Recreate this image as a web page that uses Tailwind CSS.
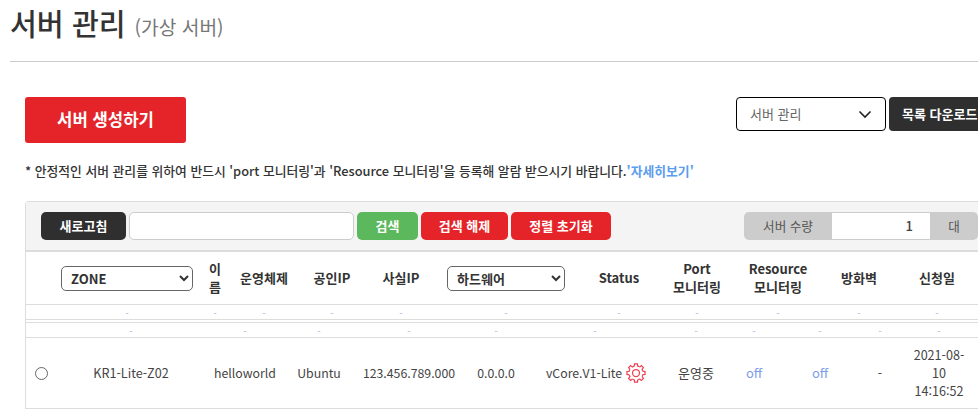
<!DOCTYPE html>
<html lang="ko">
<head>
    <meta charset="UTF-8">
    <meta name="viewport" content="width=device-width, initial-scale=1.0">
    <title>서버 관리</title>
    <script src="https://cdn.jsdelivr.net/npm/@tailwindcss/browser@4"></script>
</head>
<body class="bg-white overflow-hidden h-[409px] font-['Noto_Sans_CJK_KR','Noto_Sans',sans-serif] text-[#333]">
    <div class="w-[1100px] pl-[10px]">
        <!-- title -->
        <div class="w-[968px] h-[62px] border-b border-[#ccc] pb-[16px] flex items-baseline gap-[9px] text-[#333] leading-[44px]">
            <h1 class="text-[29.2px] font-medium leading-[44px]">서버 관리</h1>
            <span class="text-[19.2px] text-[#777]">(가상 서버)</span>
        </div>

        <div class="pl-[15px]">
            <!-- actions -->
            <div class="mt-[35px] flex items-start w-[1075px]">
                <button class="w-[161px] h-[46px] rounded-[3px] bg-[#e5242a] text-white text-[16.7px] font-bold">서버 생성하기</button>
                <div class="ml-[550px] w-[150px] h-[34px] rounded-[4px] border border-black flex items-center justify-between pl-[13px] pr-[13px] text-[13px] text-[#666]">
                    <span>서버 관리</span>
                    <svg width="14" height="9" viewBox="0 0 14 9" fill="none" stroke="#222" stroke-width="1.6"><path d="M1.5 1.5 7 7l5.5-5.5"/></svg>
                </div>
                <button class="ml-[3px] w-[110px] h-[34px] rounded-[4px] bg-[#2f2f2f] text-white text-[13px] font-bold text-left pl-[13px]">목록 다운로드</button>
            </div>

            <p class="mt-[18px] h-[20px] text-[12.8px] leading-[20px] font-medium text-[#333]">* 안정적인 서버 관리를 위하여 반드시 'port 모니터링'과 'Resource 모니터링'을 등록해 알람 받으시기 바랍니다.<a class="text-[#5c9ded] font-bold">'자세히보기'</a></p>

            <!-- panel -->
            <div class="mt-[20px] w-[1000px] border border-[#ddd] rounded-tl-[3px]">
                <div class="h-[50px] bg-[#f4f4f4] border-b-2 border-[#ddd] pl-[15px] pt-[10px] flex items-start text-[13px] font-bold text-white">
                    <button class="w-[85px] h-[28px] rounded-[5px] bg-[#2f2f2f] font-bold">새로고침</button>
                    <input class="ml-[3px] w-[225px] h-[28px] rounded-[5px] bg-white border border-[#ccc]" type="text">
                    <button class="ml-[3px] w-[61px] h-[28px] rounded-[5px] bg-[#5cb85c] font-bold">검색</button>
                    <button class="ml-[3px] w-[87px] h-[28px] rounded-[5px] bg-[#e5242a] font-bold">검색 해제</button>
                    <button class="ml-[3px] w-[100px] h-[28px] rounded-[5px] bg-[#e5242a] font-bold">정렬 초기화</button>
                    <div class="ml-[133px] w-[234px] h-[28px] rounded-[5px] bg-[#ccc] flex items-center text-[#555] font-normal text-[12.6px]">
                        <span class="w-[88px] text-center">서버 수량</span>
                        <span class="w-[98px] h-[26px] bg-white text-right pr-[17px] leading-[26px] text-[#444] font-medium text-[13px]">1</span>
                        <span class="w-[48px] text-center">대</span>
                    </div>
                </div>

                <!-- header row -->
                <div class="grid grid-cols-[29px_144px_32px_66px_70px_68px_142px_84px_72px_90px_72px_84px] h-[53px] items-center text-center text-[13px] leading-[18px] font-semibold text-[#333] border-b border-[#ddd]">
                    <div></div>
                    <div class="px-[6px]">
                        <select class="w-[132px] h-[25px] rounded-[5px] border border-[#666] bg-white text-[13px] font-semibold pl-[5px] text-[#333]"><option>ZONE</option></select>
                    </div>
                    <div class="px-[8px]">이름</div>
                    <div>운영체제</div>
                    <div>공인IP</div>
                    <div>사실IP</div>
                    <div class="px-[12px]">
                        <select class="w-[118px] h-[25px] rounded-[5px] border border-[#666] bg-white text-[13px] font-semibold pl-[5px] text-[#333]"><option>하드웨어</option></select>
                    </div>
                    <div>Status</div>
                    <div>Port<br>모니터링</div>
                    <div>Resource<br>모니터링</div>
                    <div>방화벽</div>
                    <div>신청일</div>
                </div>

                <!-- filter row -->
                <div class="grid grid-cols-[29px_144px_32px_66px_70px_68px_142px_84px_72px_90px_72px_84px] h-[15px] items-center text-center text-[10px] leading-[15px] text-[#b9b4e4] border-b border-[#ddd]">
                    <div></div><div>-</div><div>-</div><div>-</div><div>-</div><div>-</div><div>-</div><div>-</div><div>-</div><div>-</div><div>-</div><div>-</div>
                </div>

                <div class="h-[2px]"></div>

                <div class="grid grid-cols-[30px_150px_78px_70px_110px_64px_134px_68px_48px_84px_36px_82px] h-[16px] items-center text-center text-[10px] leading-[15px] text-[#b9b4e4] border-y border-[#ddd]">
                    <div></div><div>-</div><div>-</div><div>-</div><div>-</div><div>-</div><div>-</div><div>-</div><div>-</div><div>-</div><div>-</div><div>-</div>
                </div>

                <!-- server row -->
                <div class="grid grid-cols-[30px_150px_78px_70px_110px_64px_134px_68px_48px_84px_36px_82px] h-[71px] items-center text-center text-[12.3px] leading-[18px] text-[#444] border-b border-[#ddd]">
                    <div class="flex justify-center"><span class="block w-[13px] h-[13px] rounded-full border border-[#666] bg-white"></span></div>
                    <div class="text-[12.6px]">KR1-Lite-Z02</div>
                    <div>helloworld</div>
                    <div>Ubuntu</div>
                    <div>123.456.789.000</div>
                    <div>0.0.0.0</div>
                    <div class="flex items-center justify-center gap-[4px] pl-[2px]">
                        <span>vCore.V1-Lite</span>
                        <svg width="20" height="20" viewBox="-12 -12 24 24" fill="none" stroke="#ef4454" stroke-width="1.5">
                            <path d="M-2.06-8.25L-1.72-10.86L1.72-10.86L2.06-8.25A8.5 8.5 0 0 1 4.38-7.29"/>
                            <path transform="rotate(45)" d="M-2.06-8.25L-1.72-10.86L1.72-10.86L2.06-8.25A8.5 8.5 0 0 1 4.38-7.29"/>
                            <path transform="rotate(90)" d="M-2.06-8.25L-1.72-10.86L1.72-10.86L2.06-8.25A8.5 8.5 0 0 1 4.38-7.29"/>
                            <path transform="rotate(135)" d="M-2.06-8.25L-1.72-10.86L1.72-10.86L2.06-8.25A8.5 8.5 0 0 1 4.38-7.29"/>
                            <path transform="rotate(180)" d="M-2.06-8.25L-1.72-10.86L1.72-10.86L2.06-8.25A8.5 8.5 0 0 1 4.38-7.29"/>
                            <path transform="rotate(225)" d="M-2.06-8.25L-1.72-10.86L1.72-10.86L2.06-8.25A8.5 8.5 0 0 1 4.38-7.29"/>
                            <path transform="rotate(270)" d="M-2.06-8.25L-1.72-10.86L1.72-10.86L2.06-8.25A8.5 8.5 0 0 1 4.38-7.29"/>
                            <path transform="rotate(315)" d="M-2.06-8.25L-1.72-10.86L1.72-10.86L2.06-8.25A8.5 8.5 0 0 1 4.38-7.29"/>
                            <circle r="4.2"/>
                        </svg>
                    </div>
                    <div class="text-[13px]">운영중</div>
                    <div class="text-[13px] text-[#7d9ee8]">off</div>
                    <div class="text-[13px] text-[#7d9ee8]">off</div>
                    <div>-</div>
                    <div class="text-[12.6px]">2021-08-<br>10<br>14:16:52</div>
                </div>
            </div>
        </div>
    </div>
</body>
</html>
